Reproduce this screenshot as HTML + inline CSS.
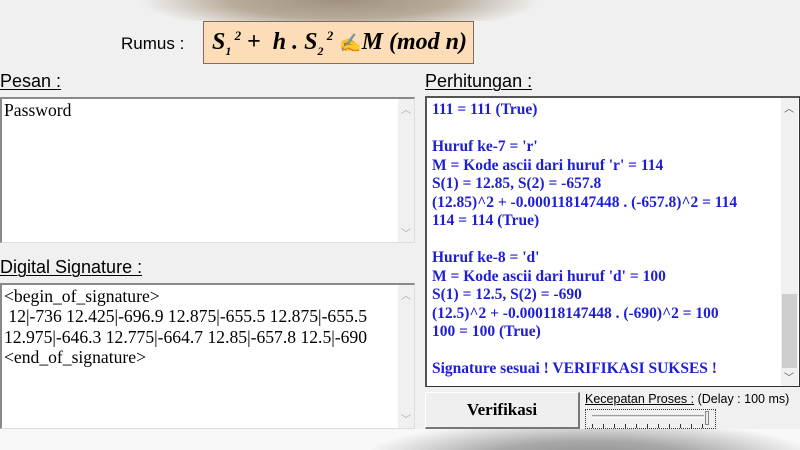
<!DOCTYPE html>
<html><head><meta charset="utf-8"><style>
*{margin:0;padding:0;box-sizing:border-box}
body{width:800px;height:450px;overflow:hidden;background:#f0f0f0;position:relative;font-family:"Liberation Sans",sans-serif}
.a{position:absolute}
.lbl{font-size:18px;color:#000;text-decoration:underline;text-decoration-thickness:1px;text-underline-offset:2px}
.ta{background:#fff;border-top:2px solid #8a8a8a;border-left:2px solid #8a8a8a;border-right:1px solid #ddd;border-bottom:1px solid #ddd}
.sb{position:absolute;top:0;right:0;width:16px;bottom:0;background:#f0f0f0}
.sb .u,.sb .d{position:absolute;left:0;width:16px;text-align:center;font-size:10px;color:#aaa}
.tm{font-family:"Liberation Serif",serif;font-size:17.6px;line-height:20.3px;color:#000;white-space:pre}
.bl{font-family:"Liberation Serif",serif;font-weight:bold;font-size:15.5px;line-height:18.5px;color:#1e1ed2;white-space:pre}
</style></head><body>
<div class="a" style="left:40px;top:0;width:540px;height:21px;background:radial-gradient(ellipse 200px 34px at 300px 0px,#a09080 0%,#b8ab9a 55%,rgba(240,240,240,0) 100%)"></div>
<div class="a" style="left:0;top:429px;width:800px;height:21px;background:#f8f8f8"></div>
<div class="a" style="left:360px;top:429px;width:440px;height:21px;background:radial-gradient(ellipse 230px 40px at 230px 30px,#8f8f8f 0%,#a8a8a8 45%,rgba(248,248,248,0) 100%)"></div>

<div class="a" style="left:121px;top:34px;font-size:17px">Rumus :</div>
<div class="a" style="left:203px;top:21px;width:271px;height:43px;background:#fddcb8;border:1px solid #7d6f60;font-family:'Liberation Serif',serif;font-weight:bold;font-style:italic;font-size:24px;padding:6px 0 0 8px;white-space:nowrap">S<sub style="font-size:12px">1</sub><sup style="font-size:13px">&nbsp;2</sup> <span style="font-style:normal">+</span>&nbsp; h . S<sub style="font-size:12px">2</sub><sup style="font-size:13px">&nbsp;2</sup> <span style="font-style:normal;font-size:18px">✍</span>M (mod n)</div>

<div class="a lbl" style="left:0;top:71px">Pesan :</div>
<div class="a ta" style="left:0;top:97px;width:415px;height:146px">
<div class="tm" style="padding:1px 0 0 2px">Password</div>
<div class="sb"><div class="u" style="top:2px">︿</div><div class="d" style="bottom:2px">﹀</div></div></div>

<div class="a lbl" style="left:0;top:257px">Digital Signature :</div>
<div class="a ta" style="left:0;top:283px;width:415px;height:146px">
<div class="tm" style="padding:1px 0 0 2px">&lt;begin_of_signature&gt;
 12|-736 12.425|-696.9 12.875|-655.5 12.875|-655.5
12.975|-646.3 12.775|-664.7 12.85|-657.8 12.5|-690
&lt;end_of_signature&gt;</div>
<div class="sb"><div class="u" style="top:2px">︿</div><div class="d" style="bottom:2px">﹀</div></div></div>

<div class="a lbl" style="left:425px;top:71px">Perhitungan :</div>
<div class="a" style="left:425px;top:96px;width:375px;height:291px;background:#fff;border:1px solid #333;border-top:2px solid #555;border-left:2px solid #555">
<div class="bl" style="padding:3px 0 0 5px">111 = 111 (True)

Huruf ke-7 = 'r'
M = Kode ascii dari huruf 'r' = 114
S(1) = 12.85, S(2) = -657.8
(12.85)^2 + -0.000118147448 . (-657.8)^2 = 114
114 = 114 (True)

Huruf ke-8 = 'd'
M = Kode ascii dari huruf 'd' = 100
S(1) = 12.5, S(2) = -690
(12.5)^2 + -0.000118147448 . (-690)^2 = 100
100 = 100 (True)

Signature sesuai ! VERIFIKASI SUKSES !</div>
<div class="sb" style="right:1px;width:17px"><div class="u" style="top:2px;color:#555">︿</div><div style="position:absolute;left:1px;width:15px;top:196px;height:74px;background:#cdcdcd"></div><div class="d" style="bottom:2px;color:#555">﹀</div></div></div>

<div class="a" style="left:425px;top:392px;width:155px;height:37px;background:#efefef;border:1px solid #fff;border-right:2px solid #777;border-bottom:2px solid #777;font-family:'Liberation Serif',serif;font-weight:bold;font-size:17px;text-align:center;line-height:34px">Verifikasi</div>
<div class="a" style="left:585px;top:392px;font-size:12.5px;white-space:nowrap"><span style="text-decoration:underline">Kecepatan Proses :</span> (Delay : 100 ms)</div>
<div class="a" style="left:585px;top:409px;width:131px;height:20px;border:1px dotted #333">
<div class="a" style="left:6px;top:5px;width:112px;height:3px;border-top:1px solid #999;border-bottom:1px solid #fff;background:#ddd"></div>
<div class="a" style="left:119px;top:1px;width:4px;height:14px;background:#eee;border:1px solid #888"></div>
<div class="a" style="left:6px;top:14px;width:112px;height:4px;background:repeating-linear-gradient(90deg,#333 0 1px,transparent 1px 11px)"></div>
</div>
</body></html>
